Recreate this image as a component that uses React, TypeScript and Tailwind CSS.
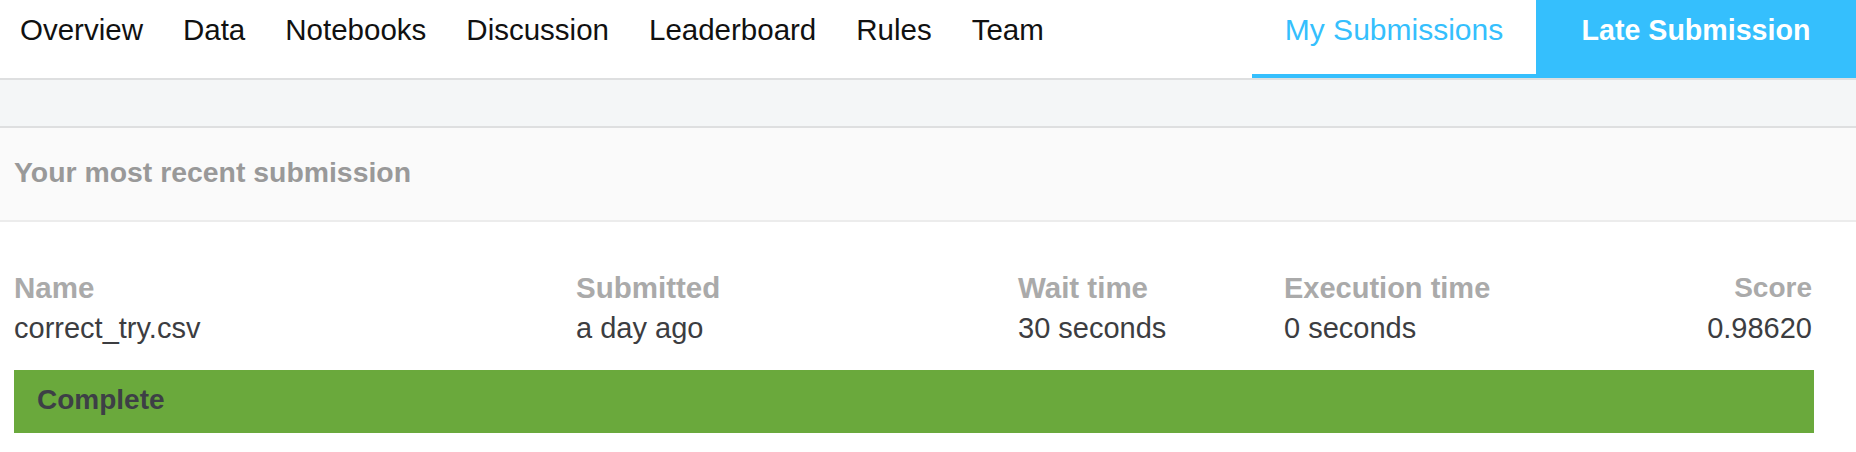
import React from "react";

const navItems = ["Overview", "Data", "Notebooks", "Discussion", "Leaderboard", "Rules", "Team"];

export default function App() {
  return (
    <div className="w-[1856px] h-[452px] bg-white overflow-hidden" style={{ fontFamily: '"Liberation Sans", Arial, sans-serif' }}>
      {/* Top nav */}
      <div className="flex h-[80px] border-b-2 border-[#dedfe0]">
        <div className="flex flex-1 gap-[40px] pl-[20px] pt-[12px]">
          {navItems.map((n) => (
            <span key={n} className="text-[29.5px] leading-[36px] text-[#111]">
              {n}
            </span>
          ))}
        </div>
        <div className="flex w-[284px] justify-center pt-[12px] border-b-4 border-[#35bffd] text-[30px] leading-[36px] text-[#35bffd]">
          My Submissions
        </div>
        <div className="flex w-[320px] justify-center pt-[12px] bg-[#35bffd] text-[28.6px] leading-[36px] font-bold text-white">
          Late Submission
        </div>
      </div>

      {/* Gray band */}
      <div className="h-[48px] bg-[#f4f6f7] border-b-2 border-[#dedfe0]" />

      {/* Panel header */}
      <div className="h-[94px] bg-[#fafafa] border-b-2 border-[#ececec] pl-[14px] pt-[26px]">
        <span className="text-[28.4px] leading-[36px] font-bold text-[#999999]">Your most recent submission</span>
      </div>

      {/* Submission details */}
      <div className="pl-[14px] w-[1814px] pt-[48px]">
        <div className="flex">
          <div className="w-[562px]">
            <div className="text-[29.5px] leading-[36px] font-bold text-[#aaaaaa]">Name</div>
            <div className="mt-[4px] text-[29px] leading-[36px] text-[#3c3d41]">correct_try.csv</div>
          </div>
          <div className="w-[442px]">
            <div className="text-[29.5px] leading-[36px] font-bold text-[#aaaaaa]">Submitted</div>
            <div className="mt-[4px] text-[29px] leading-[36px] text-[#3c3d41]">a day ago</div>
          </div>
          <div className="w-[266px]">
            <div className="text-[29.5px] leading-[36px] font-bold text-[#aaaaaa]">Wait time</div>
            <div className="mt-[4px] text-[29px] leading-[36px] text-[#3c3d41]">30 seconds</div>
          </div>
          <div className="flex-1">
            <div className="text-[29px] leading-[36px] font-bold text-[#aaaaaa]">Execution time</div>
            <div className="mt-[4px] text-[29px] leading-[36px] text-[#3c3d41]">0 seconds</div>
          </div>
          <div className="text-right pr-[2px]">
            <div className="text-[28px] leading-[36px] font-bold text-[#aaaaaa]">Score</div>
            <div className="mt-[4px] text-[29px] leading-[36px] text-[#3c3d41]">0.98620</div>
          </div>
        </div>
        <div className="mt-[24px] h-[63px] bg-[#6aa93c] pl-[23px] pt-[12px]">
          <span className="text-[28px] leading-[36px] font-bold text-[#3d3f46]">Complete</span>
        </div>
      </div>
    </div>
  );
}
